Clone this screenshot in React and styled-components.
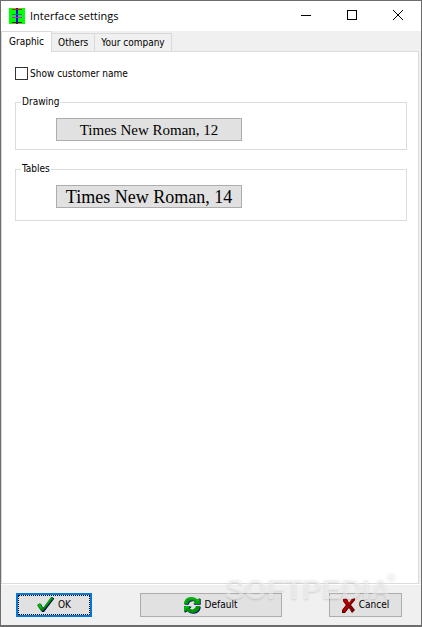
import React, { useState } from 'react';
import styled, { createGlobalStyle } from 'styled-components';

const GlobalStyle = createGlobalStyle`
  * {
    box-sizing: border-box;
  }

  body {
    margin: 0;
    background: #f0f0f0;
    color: #000;
    font-family: "DejaVu Sans Condensed", "DejaVu Sans", sans-serif;
    font-size: 10px;
    line-height: 14px;
  }
`;

const Window = styled.div`
  position: relative;
  display: flex;
  flex-direction: column;
  min-height: 100vh;
  border: 1px solid #6d6d6d;
  border-bottom-width: 2px;
  background: #f0f0f0;
`;

const TitleBar = styled.header`
  display: flex;
  align-items: center;
  height: 30px;
  padding-left: 8px;
  background: #fff;
`;

const Title = styled.h1`
  flex: 1;
  margin: 0 0 0 5px;
  font-family: "Open Sans", sans-serif;
  font-size: 11px;
  font-weight: 400;
  line-height: 16px;
`;

const WindowButton = styled.button`
  display: flex;
  align-items: center;
  justify-content: center;
  width: 46px;
  height: 30px;
  padding: 0 0 2px;
  border: 0;
  background: transparent;

  &:hover {
    background: #e5e5e5;
  }
`;

const TabList = styled.div`
  display: flex;
  align-items: flex-end;
  height: 20px;
`;

const Tab = styled.button`
  height: ${(props) => (props.$active ? '21px' : '18px')};
  margin-bottom: ${(props) => (props.$active ? '-1px' : '0')};
  padding: ${(props) => (props.$active ? '0 7px 1px' : '1px 6px 0')};
  border: 1px solid #d9d9d9;
  border-bottom: 0;
  border-left-width: ${(props) => (props.$active ? '1px' : '0')};
  background: ${(props) => (props.$active ? '#fff' : '#f0f0f0')};
  color: inherit;
  font: inherit;
  z-index: ${(props) => (props.$active ? 1 : 0)};
`;

const Panel = styled.main`
  flex: 1;
  display: flex;
  flex-direction: column;
  margin-right: 2px;
  padding: 15px 11px 15px 13px;
  border: 1px solid #dcdcdc;
  background: #fff;
`;

const CheckLabel = styled.label`
  display: flex;
  align-items: flex-start;
  gap: 2px;
  margin-bottom: 14px;
`;

const CheckBox = styled.input`
  appearance: none;
  width: 13px;
  height: 13px;
  margin: 0;
  border: 1px solid #333;
  background: #fff;

  &:checked {
    background: #333;
    box-shadow: inset 0 0 0 2px #fff;
  }
`;

const Group = styled.fieldset`
  min-width: 0;
  margin: 0 0 12px;
  padding: 9px 40px ${(props) => props.$bottom}px;
  border: 1px solid #dcdcdc;
`;

const Legend = styled.legend`
  margin-left: -35px;
  padding: 0 1px;
`;

const Button = styled.button`
  display: flex;
  align-items: center;
  justify-content: center;
  gap: 4px;
  height: 24px;
  width: ${(props) => props.$width}px;
  padding: 0;
  border: 1px solid #adadad;
  background: #e1e1e1;
  color: inherit;
  font: inherit;

  &:hover {
    background: #e5f1fb;
  }
`;

const FontButton = styled(Button)`
  width: 186px;
  height: 23px;
  font-family: "Liberation Serif", serif;
  font-size: ${(props) => props.$size}px;
  white-space: nowrap;
`;

const DefaultAction = styled(Button)`
  border: 2px solid #0078d7;
  outline: 1px dotted #000;
  outline-offset: -3px;
`;

const Footer = styled.footer`
  display: flex;
  justify-content: space-between;
  padding: 8px 19px 8px 15px;
  border-top: 1px solid #fff;
`;

const Watermark = styled.div`
  position: absolute;
  right: 30px;
  bottom: 19px;
  color: rgba(255, 255, 255, 0.5);
  font-family: "Liberation Sans", sans-serif;
  font-size: 29px;
  font-weight: 700;
  line-height: 34px;
  text-shadow: 0 1px 2px rgba(0, 0, 0, 0.13);
  pointer-events: none;

  sup {
    position: absolute;
    left: 100%;
    top: 0;
    margin-left: -4px;
    font-size: 12px;
    line-height: 10px;
  }
`;

function AppIcon() {
  return (
    <svg width="16" height="16" viewBox="0 0 16 16" shapeRendering="crispEdges">
      <path fill="#00ff00" d="M0 0h16v16H0z" />
      <path fill="#0000ff" d="M7 0h2v16H7z" />
      <path fill="#ff0000" d="M3 1h10v1H3z" />
      <path fill="#008080" d="M3 6h10v1H3z" />
      <path fill="#ff00ff" d="M3 9h10v1H3z" />
      <path fill="#800000" d="M3 14h10v1H3z" />
    </svg>
  );
}

function CheckIcon() {
  return (
    <svg width="17" height="16" viewBox="0 0 17 16">
      <path fill="#000060" d="M1 9 4 7l2 4L15 1h2v1L7 15H5z" />
      <path fill="#008000" d="M0 8 3 6l3 5L14 0h2v2L6 14H4z" />
      <path fill="#00c020" d="m1 8 2-1 2 4-1 1zM7 10l7-9h1L7 11z" />
    </svg>
  );
}

function RefreshIcon() {
  const arrow = 'M0 7C0 3 3 0 7 0c3 0 5 1 6 2.500l3-1.500v6H9l2-2C9 2.800 5 3 4 7z';

  return (
    <svg width="17" height="17" viewBox="0 0 17 17">
      <g fill="#000080" transform="translate(0.700 0.700)">
        <path d={arrow} />
        <path d={arrow} transform="rotate(180 8 8)" />
      </g>
      <g fill="#009800">
        <path d={arrow} />
        <path d={arrow} transform="rotate(180 8 8)" />
      </g>
      <path fill="none" stroke="#00d028" d="M1 6c1-4 4-5 6-5 3 0 5 1 6 3l2-1M1 13v-3h4" />
    </svg>
  );
}

function CrossIcon() {
  return (
    <svg width="13" height="15" viewBox="0 0 13 15">
      <path fill="#500000" d="M1 1h4l2 4 3-4 3-1v2L9 7l4 5-3 3-3-5-4 5H0v-3l4-5L1 3z" />
      <path fill="#900000" d="m1 1 3-1 3 5 3-4 3-1v2L8 7l4 5-2 2-3-5-4 5H1l-1-1 4-6-3-4z" />
      <path fill="#c80000" d="m2 2 2-1 2 4-1 1zM10 2h1L7 7l-1-1zM1 13l4-5 1 1-4 4z" />
    </svg>
  );
}

const tabs = ['Graphic', 'Others', 'Your company'];

export default function App() {
  const [activeTab, setActiveTab] = useState('Graphic');
  const [showCustomer, setShowCustomer] = useState(false);

  return (
    <>
      <GlobalStyle />
      <Window>
        <TitleBar>
          <AppIcon />
          <Title>Interface settings</Title>
          <WindowButton aria-label="Minimize">
            <svg width="10" height="10" shapeRendering="crispEdges">
              <path fill="#000" d="M0 5h10v1H0z" />
            </svg>
          </WindowButton>
          <WindowButton aria-label="Maximize">
            <svg width="10" height="10" shapeRendering="crispEdges">
              <path fill="none" stroke="#000" d="M.5.5h9v9h-9z" />
            </svg>
          </WindowButton>
          <WindowButton aria-label="Close">
            <svg width="10" height="10">
              <path fill="none" stroke="#000" d="m0 0 10 10M10 0 0 10" />
            </svg>
          </WindowButton>
        </TitleBar>
        <TabList role="tablist">
          {tabs.map((tab) => (
            <Tab
              key={tab}
              role="tab"
              aria-selected={tab === activeTab}
              $active={tab === activeTab}
              onClick={() => setActiveTab(tab)}
            >
              {tab}
            </Tab>
          ))}
        </TabList>
        <Panel>
          <CheckLabel>
            <CheckBox
              type="checkbox"
              checked={showCustomer}
              onChange={(e) => setShowCustomer(e.target.checked)}
            />
            Show customer name
          </CheckLabel>
          <Group $bottom={8}>
            <Legend>Drawing</Legend>
            <FontButton $size={15}>Times New Roman, 12</FontButton>
          </Group>
          <Group $bottom={12}>
            <Legend>Tables</Legend>
            <FontButton $size={18}>Times New Roman, 14</FontButton>
          </Group>
        </Panel>
        <Footer>
          <DefaultAction $width={76}>
            <CheckIcon />
            OK
          </DefaultAction>
          <Button $width={142}>
            <RefreshIcon />
            Default
          </Button>
          <Button $width={73}>
            <CrossIcon />
            Cancel
          </Button>
        </Footer>
        <Watermark aria-hidden="true">
          SOFTPEDIA<sup>®</sup>
        </Watermark>
      </Window>
    </>
  );
}
